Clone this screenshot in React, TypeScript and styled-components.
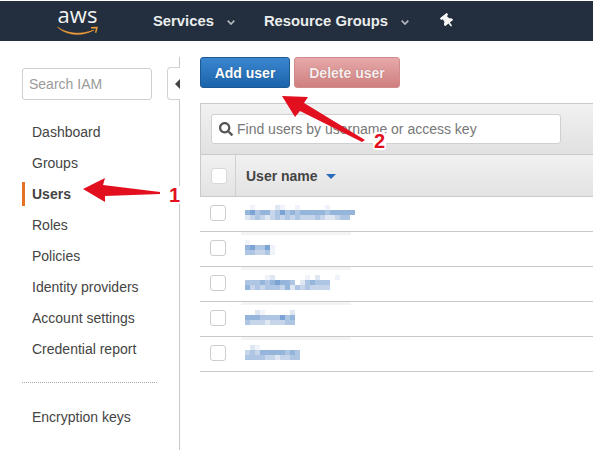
import React from "react";
import styled, { createGlobalStyle } from "styled-components";
import { FaThumbtack, FaSearch } from "react-icons/fa";

const Global = createGlobalStyle`
  html, body { margin: 0; padding: 0; background: #fff; overflow: hidden; }
  body { font-family: "Liberation Sans", Arial, sans-serif; font-size: 14px; color: #444; }
  * { box-sizing: border-box; }
`;

const Page = styled.div`
  position: relative;
  width: 593px;
  height: 450px;
  overflow: hidden;
  padding-top: 1px;
`;

const TopBar = styled.header`
  height: 40px;
  background: #232f3e;
  display: flex;
  align-items: center;
  padding-left: 57px;
`;

const Logo = styled.div`
  width: 41px;
  height: 34px;
  margin-right: 55px;
  display: flex;
  flex-direction: column;
  align-items: center;
`;

const LogoWord = styled.span`
  font-family: "Open Sans", sans-serif;
  font-size: 22px;
  line-height: 27px;
  height: 27px;
  margin-top: -3px;
  color: #f4f4f4;
`;

const Smile = styled.svg`
  margin-top: -2px;
  width: 42px;
  height: 11px;
  flex: none;
`;

const TopMenu = styled.div`
  display: flex;
  align-items: center;
  gap: 13px;
  margin-right: 29px;
  font-size: 14.8px;
  font-weight: 700;
  color: #eaeded;
`;

const Chevron = styled.svg`
  width: 8px;
  height: 5px;
  margin-top: 2px;
`;

const Pin = styled(FaThumbtack)`
  width: 11px;
  height: 14px;
  color: #f6f6f6;
  margin: -1px 0 0 4px;
  transform: rotate(-38deg);
`;

const Body = styled.div`
  display: flex;
  align-items: stretch;
  height: 409px;
`;

const Sidebar = styled.aside`
  width: 180px;
  flex: none;
  margin-top: 16px;
  padding: 10px 0 0 22px;
  border-right: 1px solid #c8c8c8;
`;

const SidebarTop = styled.div`
  display: flex;
  align-items: flex-end;
  gap: 15px;
  margin-right: -1px;
`;

const IamSearch = styled.div`
  width: 130px;
  height: 32px;
  padding-left: 6px;
  display: flex;
  align-items: center;
  border: 1px solid #cfcfcf;
  border-radius: 3px;
  color: #9a9a9a;
  font-size: 14px;
`;

const Collapse = styled.div`
  width: 13px;
  height: 33px;
  background: #fff;
  border: 1px solid #d2d2d2;
  border-right: none;
  border-radius: 4px 0 0 4px;
  display: flex;
  align-items: center;
  justify-content: flex-end;
  &::before {
    content: "";
    border-style: solid;
    border-width: 5px 5px 5px 0;
    border-color: transparent #444 transparent transparent;
  }
`;

const NavList = styled.nav`
  display: flex;
  flex-direction: column;
  gap: 7px;
  margin-top: 20px;
`;

const NavLink = styled.a<{ $active?: boolean }>`
  height: 24px;
  line-height: 24px;
  padding-left: 7px;
  border-left: 3px solid ${(p) => (p.$active ? "#e47125" : "transparent")};
  font-size: 14px;
  font-weight: ${(p) => (p.$active ? 700 : 400)};
  color: #444;
`;

const NavDivider = styled.div`
  width: 135px;
  margin: 14px 0 15px;
  border-top: 1px dotted #aaa;
`;

const Main = styled.main`
  flex: 1;
  min-width: 0;
  padding: 16px 0 0 20px;
`;

const Actions = styled.div`
  display: flex;
  gap: 4px;
`;

const Button = styled.button<{ $danger?: boolean; $w: number }>`
  width: ${(p) => p.$w}px;
  height: 31px;
  padding: 0;
  border-radius: 3px;
  border: 1px solid ${(p) => (p.$danger ? "#d28b8b" : "#1d5a94")};
  background: ${(p) =>
    p.$danger
      ? "linear-gradient(#e6a9a9, #d07f7f)"
      : "linear-gradient(#3a87cf, #1b63ab)"};
  color: ${(p) => (p.$danger ? "#fbeeee" : "#fff")};
  font-family: inherit;
  font-size: 14px;
  font-weight: 700;
  text-shadow: 0 0 1px rgba(0, 0, 0, 0.35);
`;

const Table = styled.section`
  margin-top: 15px;
  width: 420px;
`;

const Toolbar = styled.div`
  height: 52px;
  padding: 10px 0 0 10px;
  background: linear-gradient(#f1f1f1, #e1e1e1);
  border: 1px solid #cacaca;
  border-right: none;
`;

const FindBox = styled.div`
  width: 350px;
  height: 30px;
  padding-left: 7px;
  display: flex;
  align-items: center;
  gap: 4px;
  background: #fff;
  border: 1px solid #d0d0d0;
  border-radius: 3px;
  color: #777;
  font-size: 14px;
`;

const FindIcon = styled(FaSearch)`
  width: 14px;
  height: 14px;
  color: #555;
`;

const HeaderRow = styled.div`
  height: 42px;
  display: flex;
  background: linear-gradient(#f1f1f1, #e3e3e3);
  border-left: 1px solid #cacaca;
  border-bottom: 1px solid #cacaca;
`;

const CheckCell = styled.div`
  width: 35px;
  flex: none;
  display: flex;
  align-items: center;
  padding-left: 10px;
  border-right: 1px solid #d0d0d0;
`;

const HeaderCheck = styled.span`
  width: 16px;
  height: 16px;
  background: #fff;
  border: 1px solid #d8d8d8;
  border-radius: 3px;
`;

const ColumnTitle = styled.div`
  display: flex;
  align-items: center;
  gap: 8px;
  padding-left: 10px;
  font-size: 14px;
  font-weight: 700;
  color: #444;
  &::after {
    content: "";
    margin-top: 2px;
    border-style: solid;
    border-width: 5px 5px 0;
    border-color: #2a6ebb transparent transparent;
  }
`;

const Row = styled.div<{ $stripe?: boolean }>`
  height: 35px;
  display: flex;
  align-items: flex-start;
  gap: 19px;
  padding: 8px 0 0 10px;
  border-bottom: 1px solid #c8c8c8;
  background: ${(p) =>
    p.$stripe
      ? "linear-gradient(#f4f4f4, #f4f4f4) 41px 0 / 110px 3px no-repeat"
      : "none"};
`;

const RowCheck = styled.span`
  width: 16px;
  height: 16px;
  flex: none;
  border: 1px solid #cdcdcd;
  border-radius: 3px;
`;

const Overlay = styled.svg`
  position: absolute;
  left: 0;
  top: 0;
  width: 593px;
  height: 450px;
  pointer-events: none;
`;

const Callout = styled.span<{ $x: number; $y: number }>`
  position: absolute;
  left: ${(p) => p.$x}px;
  top: ${(p) => p.$y}px;
  padding: 0 1px;
  font-size: 20px;
  line-height: 18px;
  font-weight: 700;
  color: #e2101f;
  background: #fff;
  border-radius: 3px;
`;

const palette: Record<string, string> = {
  a: "#7ba3d3",
  b: "#96b5da",
  c: "#aec6e3",
  d: "#c6d5ea",
  e: "#dfe7f3",
  f: "#f0f4fa",
  g: "#ffffff",
};

const names: string[][] = [
  ["gfggggefggfgggggfggggg", "bacbbdcacbcbbbbbcbbbbb", "edcdedcdcdcdddcdeedcc"],
  ["fggggg", "baccaf", "ccddcf"],
  ["ggggfeggggggfgegggf", "cccbcbabbcgecbccc", "bdcdcccdbecdcdddd"],
  ["ggefggggge", "bbbccccacb", "cdddedddcc"],
  ["gefgggggggg", "dcdbbbbbcbc", "ccccddeddcc"],
];

const BlurredName = ({ rows }: { rows: string[] }) => (
  <svg width={rows[0].length * 5} height={15} shapeRendering="crispEdges" aria-hidden>
    {rows.map((row, y) =>
      row.split("").map((k, x) => (
        <rect key={`${x}-${y}`} x={x * 5} y={y * 5} width={5} height={5} fill={palette[k]} />
      ))
    )}
  </svg>
);

const nav = ["Dashboard", "Groups", "Users", "Roles", "Policies", "Identity providers", "Account settings", "Credential report"];

const Caret = () => (
  <Chevron viewBox="0 0 8 5">
    <path d="M0.7 0.7 L4 4 L7.3 0.7" fill="none" stroke="#b4b8bd" strokeWidth="1.7" />
  </Chevron>
);

export default function App() {
  return (
    <Page>
      <Global />
      <TopBar>
        <Logo>
          <LogoWord>aws</LogoWord>
          <Smile viewBox="0 0 42 11">
            <path d="M0.5 1 C10 8 24 9 37 4 C25 11 9 9.5 0.5 1 Z" fill="#f29d38" stroke="#f29d38" strokeWidth="0.5" />
            <path d="M34 1.8 L40 1.6 L38.6 6.8" fill="none" stroke="#f29d38" strokeWidth="1.4" />
          </Smile>
        </Logo>
        <TopMenu>Services <Caret /></TopMenu>
        <TopMenu>Resource Groups <Caret /></TopMenu>
        <Pin />
      </TopBar>
      <Body>
        <Sidebar>
          <SidebarTop>
            <IamSearch>Search IAM</IamSearch>
            <Collapse />
          </SidebarTop>
          <NavList>
            {nav.map((n) => (
              <NavLink key={n} $active={n === "Users"}>{n}</NavLink>
            ))}
            <NavDivider />
            <NavLink>Encryption keys</NavLink>
          </NavList>
        </Sidebar>
        <Main>
          <Actions>
            <Button $w={90}>Add user</Button>
            <Button $w={106} $danger>Delete user</Button>
          </Actions>
          <Table>
            <Toolbar>
              <FindBox>
                <FindIcon />
                Find users by username or access key
              </FindBox>
            </Toolbar>
            <HeaderRow>
              <CheckCell><HeaderCheck /></CheckCell>
              <ColumnTitle>User name</ColumnTitle>
            </HeaderRow>
            {names.map((rows, i) => (
              <Row key={i} $stripe={i > 0}>
                <RowCheck />
                <BlurredName rows={rows} />
              </Row>
            ))}
          </Table>
        </Main>
      </Body>
      <Overlay viewBox="0 0 593 450">
        <path d="M83 189 L105 178 L103 185 L160 192 L160 194 L105 196 L105 202 Z" fill="#e2101f" />
        <path d="M282 96 L308 97 L304 103 L365 140 L362 142 L300 111 L295 117 Z" fill="#e2101f" />
      </Overlay>
      <Callout $x={168} $y={186}>1</Callout>
      <Callout $x={373} $y={132}>2</Callout>
    </Page>
  );
}
